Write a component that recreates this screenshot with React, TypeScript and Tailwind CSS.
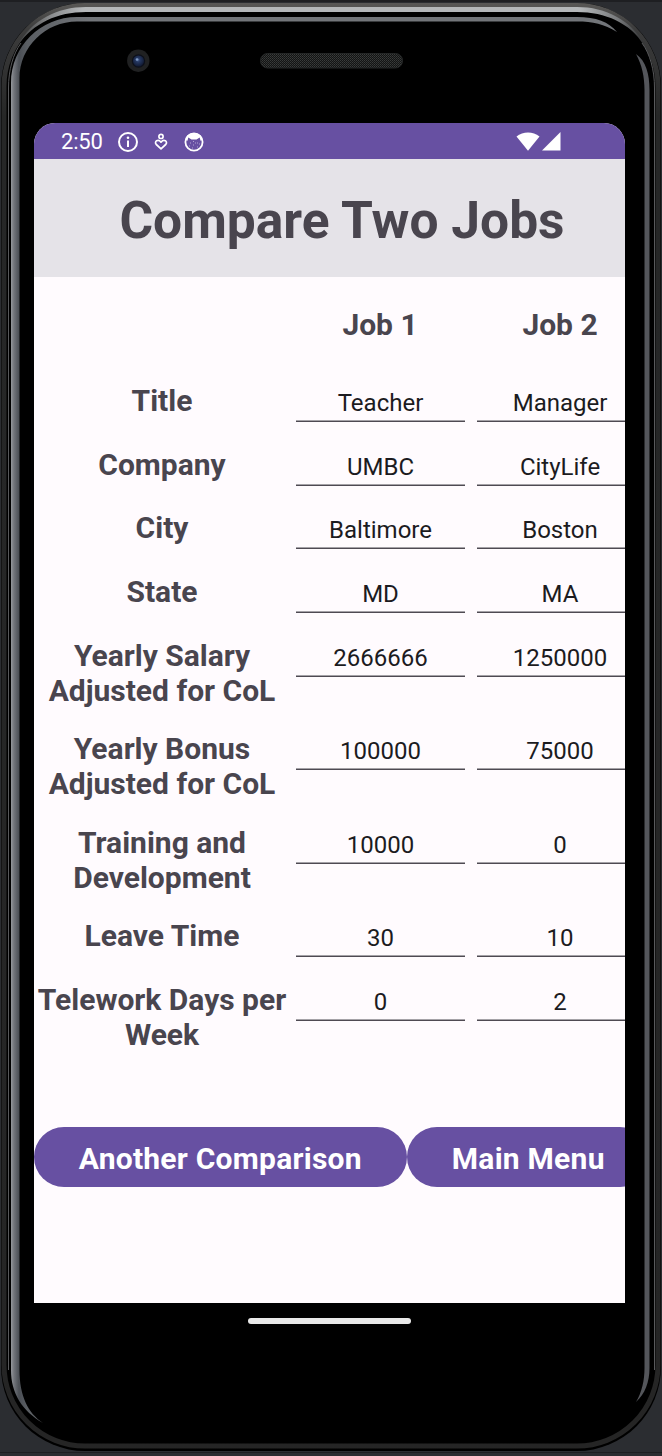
import React from "react";

type Row = { label: string; tall?: boolean; values: [string, string] };

const rows: Row[] = [
  { label: "Title", values: ["Teacher", "Manager"] },
  { label: "Company", values: ["UMBC", "CityLife"] },
  { label: "City", values: ["Baltimore", "Boston"] },
  { label: "State", values: ["MD", "MA"] },
  { label: "Yearly Salary\nAdjusted for CoL", tall: true, values: ["2666666", "1250000"] },
  { label: "Yearly Bonus\nAdjusted for CoL", tall: true, values: ["100000", "75000"] },
  { label: "Training and\nDevelopment", tall: true, values: ["10000", "0"] },
  { label: "Leave Time", values: ["30", "10"] },
  { label: "Telework Days per\nWeek", tall: true, values: ["0", "2"] },
];

function PhoneFrame() {
  return (
    <svg className="absolute inset-0" width="662" height="1456" viewBox="0 0 662 1456" fill="none">
      <defs>
        <linearGradient id="rim" x1="0" y1="0" x2="0" y2="1456" gradientUnits="userSpaceOnUse">
          <stop offset="0" stopColor="#5c5b59" />
          <stop offset="0.02" stopColor="#3c3c3c" />
          <stop offset="0.08" stopColor="#262727" />
          <stop offset="1" stopColor="#252525" />
        </linearGradient>
        <linearGradient id="silver" x1="20" y1="0" x2="643" y2="0" gradientUnits="userSpaceOnUse">
          <stop offset="0" stopColor="#444546" />
          <stop offset="0.05" stopColor="#8a8c8e" />
          <stop offset="0.1" stopColor="#b4b7b9" />
          <stop offset="0.9" stopColor="#b4b7b9" />
          <stop offset="0.96" stopColor="#77797b" />
          <stop offset="1" stopColor="#333435" />
        </linearGradient>
        <linearGradient id="gloss" x1="11" y1="0" x2="91" y2="0" gradientUnits="userSpaceOnUse">
          <stop offset="0" stopColor="#96999d" />
          <stop offset="0.035" stopColor="#73767c" />
          <stop offset="0.1" stopColor="#4b4f55" />
          <stop offset="0.2" stopColor="#5a5e63" />
          <stop offset="1" stopColor="#727579" />
        </linearGradient>
        <radialGradient id="lens" cx="0.45" cy="0.4" r="0.6">
          <stop offset="0" stopColor="#526b9d" />
          <stop offset="0.3" stopColor="#263963" />
          <stop offset="1" stopColor="#111a33" />
        </radialGradient>
        <pattern id="mesh" width="2" height="2" patternUnits="userSpaceOnUse">
          <rect width="2" height="2" fill="#131414" />
          <rect width="1" height="1" fill="#3a3c3b" />
          <rect x="1" y="1" width="1" height="1" fill="#2f3130" />
        </pattern>
      </defs>
      <rect width="662" height="1456" fill="#2b2d31" />
      <rect width="662" height="2" fill="#1e1f22" />
      <rect y="1452" width="662" height="1" fill="#1e1f22" />
      <rect x="1" y="3" width="660" height="1448" rx="84" fill="#000" />
      <rect x="4" y="5.5" width="654" height="1440.5" rx="81" stroke="url(#rim)" strokeWidth="5" />
      <path d="M8.5 1370V88C8.5 70 13 54 21 43M654.5 1370V88C654.5 70 650 54 642 43" stroke="#58595b" />
      <path d="M86 7H577C606 7 631 20 645 45C629 23 606 12 577 12H86C57 12 34 23 18 45C32 20 57 7 86 7Z" fill="url(#silver)" />
      <path d="M11 1370V83C11 46.5 40.5 17 77 17H577C596 17 609 22 617 32C604 24 593 21.5 577 21.5H77C45.5 21.5 19.5 47 19.5 78V1370C19.5 1396 28 1413 43 1423C22 1411 11 1393 11 1370Z" fill="url(#gloss)" />
      <path d="M636 54C646 61 649.5 74 649.5 90V1368C649.5 1382 645 1394 636 1402C642 1392 644.5 1380 644.5 1368V90C644.5 77 642 65 636 54Z" fill="#54565b" />
      <circle cx="138.3" cy="60.7" r="11.2" fill="#202122" />
      <circle cx="138.5" cy="61" r="6.7" fill="#0d101a" />
      <circle cx="138.5" cy="61" r="5.5" fill="url(#lens)" />
      <circle cx="137" cy="59.5" r="1.3" fill="#7f99c4" />
      <rect x="260.5" y="53.5" width="142" height="14.5" rx="7" fill="url(#mesh)" stroke="#242626" />
    </svg>
  );
}

function InfoIcon() {
  return (
    <svg width="22" height="22" viewBox="0 0 22 22" fill="none">
      <circle cx="11" cy="11" r="9" stroke="#fff" strokeWidth="2" />
      <path d="M11 9.5V16" stroke="#fff" strokeWidth="2" />
      <circle cx="11" cy="6.8" r="1.3" fill="#fff" />
    </svg>
  );
}

function CareIcon() {
  return (
    <svg width="14" height="18" viewBox="0 0 14 18" fill="none" stroke="#fff" strokeWidth="1.7">
      <circle cx="7" cy="3.4" r="2.1" />
      <path d="M7 15.8L2.3 11.5C-.3 8.3 4.2 5.6 7 9.2C9.8 5.6 14.3 8.3 11.7 11.5Z" strokeLinejoin="round" />
    </svg>
  );
}

function CatIcon() {
  return (
    <svg width="20" height="20" viewBox="0 0 20 20" fill="none">
      <circle cx="10" cy="10" r="8.6" stroke="#fff" strokeWidth="1.8" />
      <path d="M1.5 8C2.5 3 6 1 10 1S17.5 3 18.5 8L16.5 8.8L15.7 5.5L12.5 7.5H7.5L4.300 5.5L3.5 8.8Z" fill="#fff" />
      <path d="M6 11h1M9 9.5h1M13 11h1M5 14h1M9 13h1M13 15h1M15 12h1M8 16h1M11 11h1" stroke="#c5b9dd" strokeWidth="0.8" />
    </svg>
  );
}

function StatusBar() {
  return (
    <div className="flex h-9 shrink-0 items-center bg-[#6750a2] pl-[27px] pr-16 pt-px text-white">
      <span className="w-[56px] text-[22px] leading-[26px] tracking-[-0.2px]">2:50</span>
      <InfoIcon />
      <span className="ml-[15px]"><CareIcon /></span>
      <span className="ml-[16px]"><CatIcon /></span>
      <svg className="ml-auto" width="45" height="20" viewBox="0 0 45 20" fill="#fff">
        <path d="M0.5 4.500C7-1 17-1 23.500 4.500L12 18.700Z" />
        <path d="M44.500 0V18.500H26Z" />
      </svg>
    </div>
  );
}

function Field({ value }: { value: string }) {
  return (
    <div className="h-[39px] border-b border-[#4f4a53] pt-[6px] text-center text-[24px] leading-[28px] text-[#1c1b1f] shadow-[inset_0_-1px_0_#a5a2a7]">
      {value}
    </div>
  );
}

export default function App() {
  return (
    <div className="relative h-[1456px] w-[662px] overflow-hidden font-['Roboto',sans-serif]">
      <PhoneFrame />
      <div className="relative flex h-full flex-col pl-[34px] pt-[123px]">
        <div className="flex h-[1180px] w-[591px] flex-col overflow-hidden rounded-t-[21px] bg-[#fffbfe]">
          <StatusBar />
          <div className="flex w-[616px] shrink-0 flex-col text-[#49454e]">
            <h1 className="flex h-[118px] items-center justify-center bg-[#e5e3e8] pt-[6px] text-[51.5px] font-bold">Compare Two Jobs</h1>
            <div className="flex h-[106.2px] pt-[30px] text-center text-[30px] font-bold leading-[35px]">
              <span className="w-[256px]" />
              <span className="w-[180px]">Job 1</span>
              <span className="w-[180px]">Job 2</span>
            </div>
            {rows.map((row) => (
              <div
                key={row.label}
                className={
                  row.tall
                    ? "grid h-[93.6px] grid-cols-[256px_169px_166px] items-start"
                    : "grid h-[63.6px] grid-cols-[256px_169px_166px] items-start"
                }
              >
                <div className="whitespace-pre text-center text-[30px] font-bold leading-[35px]">{row.label}</div>
                <div className="ml-1.5 w-[169px]"><Field value={row.values[0]} /></div>
                <div className="ml-[18px] w-[166px]"><Field value={row.values[1]} /></div>
              </div>
            ))}
            <div className="mt-[51.2px] flex h-[60px] text-[30px] font-bold tracking-[0.25px] text-white">
              <button className="w-[372.5px] rounded-full bg-[#6750a2] pt-[3px]">Another Comparison</button>
              <button className="w-[243.5px] rounded-full bg-[#6750a2] pt-[3px]">Main Menu</button>
            </div>
          </div>
        </div>
        <div className="ml-[214px] mt-[15px] h-[6px] w-[163px] rounded-full bg-[#e9e9e9]" />
      </div>
    </div>
  );
}
